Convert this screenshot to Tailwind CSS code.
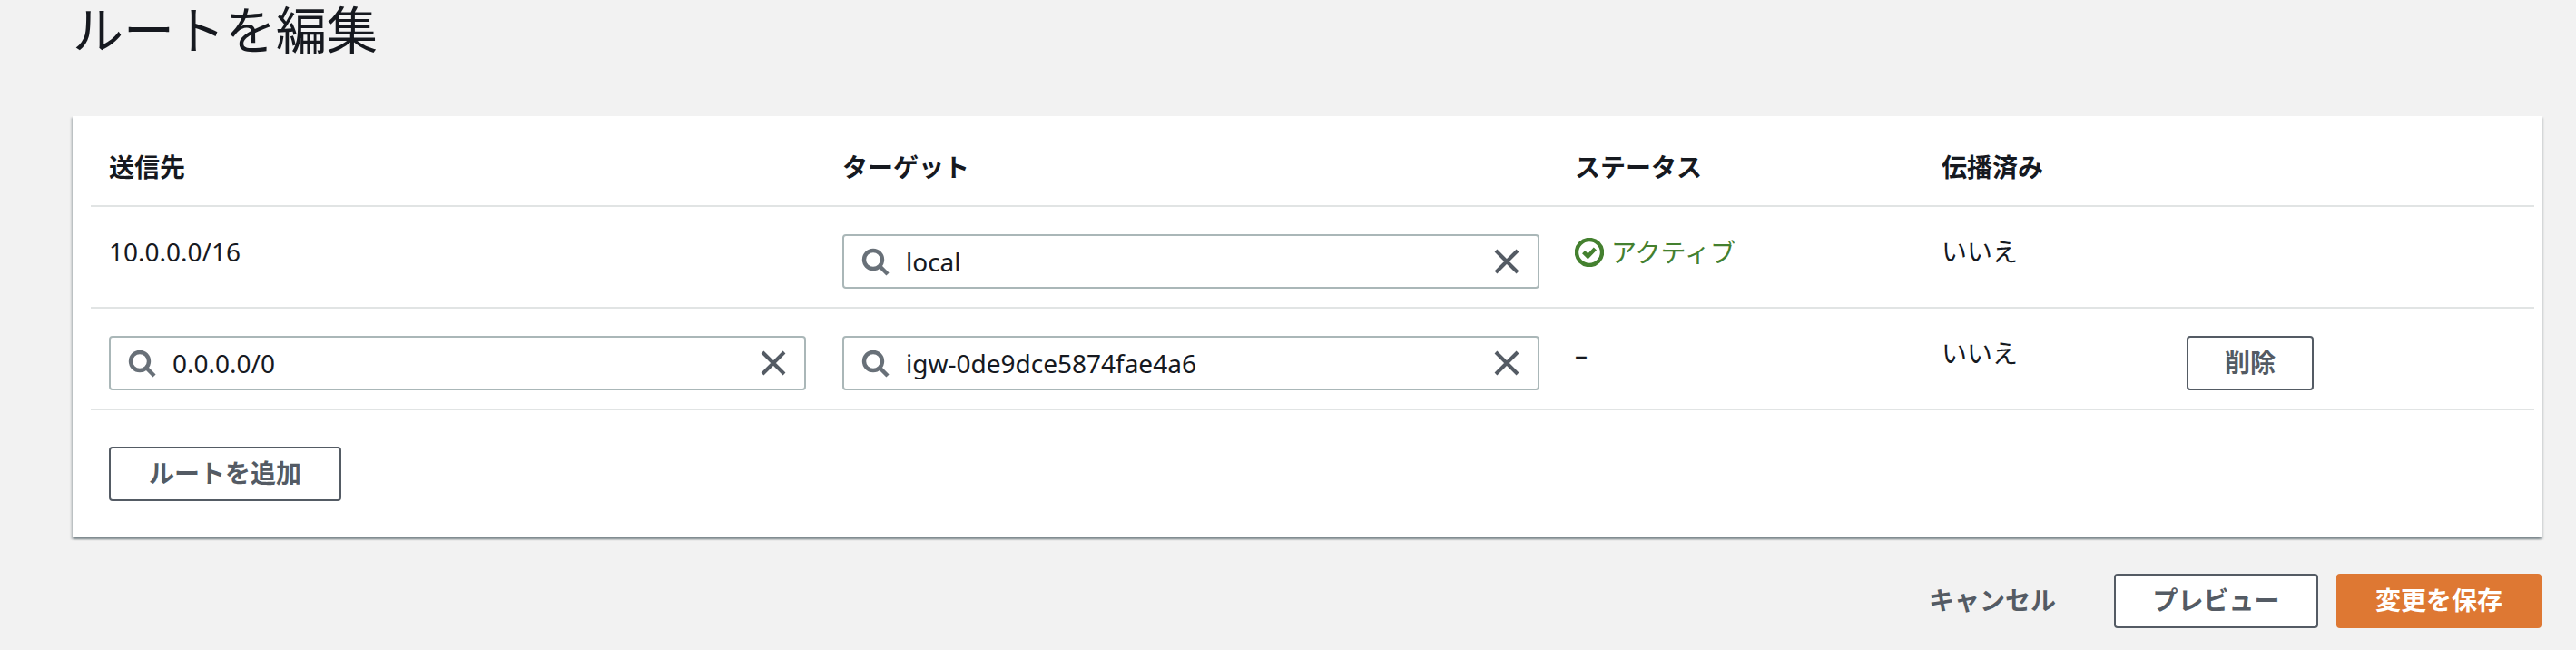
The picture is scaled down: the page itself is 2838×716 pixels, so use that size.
<!DOCTYPE html>
<html lang="ja">
<head>
    <meta charset="UTF-8">
    <meta name="viewport" content="width=device-width, initial-scale=1.0">
    <title>ルートを編集</title>
    <script src="https://cdn.jsdelivr.net/npm/@tailwindcss/browser@4"></script>
</head>
<body class="bg-[#f2f2f2] h-[716px] overflow-hidden pl-[80px] pr-[38px] text-[#16191f] text-[28px] leading-[40px] font-['Noto_Sans','Noto_Sans_CJK_JP',sans-serif]">
    <h1 class="h-[64px] mb-[64px] text-[56px] leading-[64px] font-normal">ルートを編集</h1>

    <div class="bg-white h-[464px] pl-[20px] pr-[8px] shadow-[0_2px_2px_0_rgba(0,28,36,0.3),2px_2px_2px_0_rgba(0,28,36,0.15),-2px_2px_2px_0_rgba(0,28,36,0.15)]">
        <div class="grid grid-cols-[808px_807px_404px_270px_140px] pl-[20px] pt-[36px] pb-[22px] border-b-2 border-[#e1e4e4] font-bold">
            <div>送信先</div>
            <div>ターゲット</div>
            <div>ステータス</div>
            <div>伝播済み</div>
        </div>

        <div class="grid grid-cols-[808px_807px_404px_270px_140px] pl-[20px] pt-[30px] pb-[20px] border-b-2 border-[#e1e4e4]">
            <div class="-mt-[1px]">10.0.0.0/16</div>
            <div class="flex items-center h-[60px] w-[768px] px-[18px] border-2 border-[#aab7b8] rounded-[4px]">
                <svg class="w-[32px] h-[32px] shrink-0 text-[#687078]" viewBox="0 0 16 16" fill="none" stroke="currentColor" stroke-width="2.2"><circle cx="7" cy="7" r="5"/><path d="M10.5 10.5 15 15"/></svg>
                <span class="ml-[18px] flex-1">local</span>
                <svg class="w-[32px] h-[32px] shrink-0 text-[#545b64]" viewBox="0 0 16 16" fill="none" stroke="currentColor" stroke-width="2"><path d="M2 2 14 14M14 2 2 14"/></svg>
            </div>
            <div class="flex items-center h-[40px] gap-[8px] text-[#44802f]">
                <svg class="w-[32px] h-[32px] shrink-0" viewBox="0 0 16 16" fill="none" stroke="currentColor" stroke-width="2.2"><circle cx="8" cy="8" r="7"/><path d="M4.8 7.8 7.2 10.2 11.2 6"/></svg>
                <span>アクティブ</span>
            </div>
            <div class="-mt-[1px]">いいえ</div>
        </div>

        <div class="grid grid-cols-[808px_807px_404px_270px_140px] pl-[20px] pt-[30px] pb-[20px] border-b-2 border-[#e1e4e4]">
            <div class="flex items-center h-[60px] w-[768px] px-[18px] border-2 border-[#aab7b8] rounded-[4px]">
                <svg class="w-[32px] h-[32px] shrink-0 text-[#687078]" viewBox="0 0 16 16" fill="none" stroke="currentColor" stroke-width="2.2"><circle cx="7" cy="7" r="5"/><path d="M10.5 10.5 15 15"/></svg>
                <span class="ml-[18px] flex-1">0.0.0.0/0</span>
                <svg class="w-[32px] h-[32px] shrink-0 text-[#545b64]" viewBox="0 0 16 16" fill="none" stroke="currentColor" stroke-width="2"><path d="M2 2 14 14M14 2 2 14"/></svg>
            </div>
            <div class="flex items-center h-[60px] w-[768px] px-[18px] border-2 border-[#aab7b8] rounded-[4px]">
                <svg class="w-[32px] h-[32px] shrink-0 text-[#687078]" viewBox="0 0 16 16" fill="none" stroke="currentColor" stroke-width="2.2"><circle cx="7" cy="7" r="5"/><path d="M10.5 10.5 15 15"/></svg>
                <span class="ml-[18px] flex-1">igw-0de9dce5874fae4a6</span>
                <svg class="w-[32px] h-[32px] shrink-0 text-[#545b64]" viewBox="0 0 16 16" fill="none" stroke="currentColor" stroke-width="2"><path d="M2 2 14 14M14 2 2 14"/></svg>
            </div>
            <div>–</div>
            <div class="-mt-[1px]">いいえ</div>
            <button class="h-[60px] w-[140px] pb-[2px] bg-white border-2 border-[#545b64] rounded-[4px] text-[#545b64] font-bold">削除</button>
        </div>

        <div class="pl-[20px] pt-[40px]">
            <button class="h-[60px] w-[256px] pb-[2px] bg-white border-2 border-[#545b64] rounded-[4px] text-[#545b64] font-bold">ルートを追加</button>
        </div>
    </div>

    <div class="flex items-center justify-end mt-[40px]">
        <button class="pb-[2px] text-[#545b64] font-bold mr-[64px]">キャンセル</button>
        <button class="h-[60px] w-[225px] pb-[2px] bg-white border-2 border-[#545b64] rounded-[4px] text-[#545b64] font-bold mr-[20px]">プレビュー</button>
        <button class="h-[60px] w-[226px] pb-[2px] bg-[#de7833] rounded-[4px] text-white font-bold">変更を保存</button>
    </div>
</body>
</html>
